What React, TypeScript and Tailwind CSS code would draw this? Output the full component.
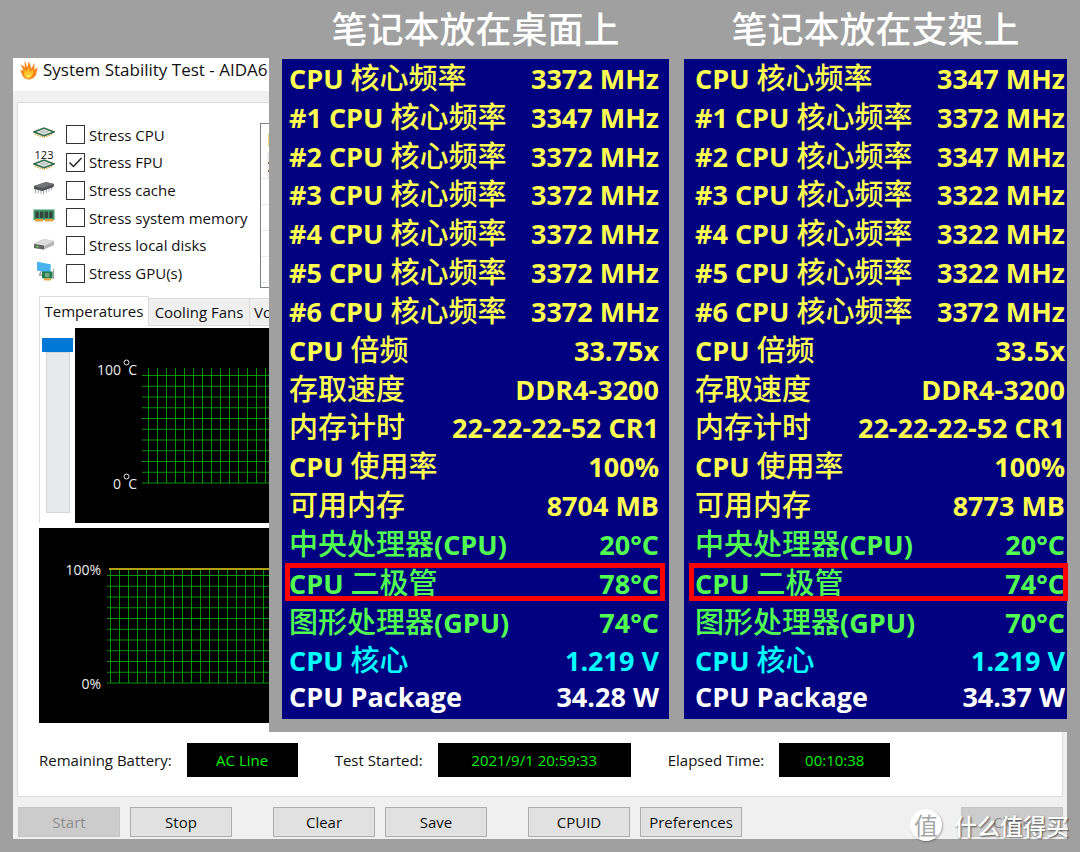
import { Fragment, type ReactNode } from "react";

type Tone = "yellow" | "green" | "cyan" | "white";

const toneClass: Record<Tone, string> = {
  yellow: "text-[#ffff50]",
  green: "text-[#50ff50]",
  cyan: "text-[#00ffff]",
  white: "text-white",
};

type Reading = {
  label: string;
  desk: string;
  stand: string;
  tone: Tone;
  marked?: boolean;
};

const readings: Reading[] = [
  { label: "CPU 核心频率", desk: "3372 MHz", stand: "3347 MHz", tone: "yellow" },
  { label: "#1 CPU 核心频率", desk: "3347 MHz", stand: "3372 MHz", tone: "yellow" },
  { label: "#2 CPU 核心频率", desk: "3372 MHz", stand: "3347 MHz", tone: "yellow" },
  { label: "#3 CPU 核心频率", desk: "3372 MHz", stand: "3322 MHz", tone: "yellow" },
  { label: "#4 CPU 核心频率", desk: "3372 MHz", stand: "3322 MHz", tone: "yellow" },
  { label: "#5 CPU 核心频率", desk: "3372 MHz", stand: "3322 MHz", tone: "yellow" },
  { label: "#6 CPU 核心频率", desk: "3372 MHz", stand: "3372 MHz", tone: "yellow" },
  { label: "CPU 倍频", desk: "33.75x", stand: "33.5x", tone: "yellow" },
  { label: "存取速度", desk: "DDR4-3200", stand: "DDR4-3200", tone: "yellow" },
  { label: "内存计时", desk: "22-22-22-52 CR1", stand: "22-22-22-52 CR1", tone: "yellow" },
  { label: "CPU 使用率", desk: "100%", stand: "100%", tone: "yellow" },
  { label: "可用内存", desk: "8704 MB", stand: "8773 MB", tone: "yellow" },
  { label: "中央处理器(CPU)", desk: "20°C", stand: "20°C", tone: "green" },
  { label: "CPU 二极管", desk: "78°C", stand: "74°C", tone: "green", marked: true },
  { label: "图形处理器(GPU)", desk: "74°C", stand: "70°C", tone: "green" },
  { label: "CPU 核心", desk: "1.219 V", stand: "1.219 V", tone: "cyan" },
  { label: "CPU Package", desk: "34.28 W", stand: "34.37 W", tone: "white" },
];

// Latin runs are bold, Chinese runs stay lighter and a little larger
function MixedText({ text }: { text: string }) {
  const parts = text.split(/([\u4e00-\u9fff]+)/);
  return (
    <>
      {parts.map((part, i) =>
        /[\u4e00-\u9fff]/.test(part) ? (
          <span key={i} className="font-['Noto_Sans_CJK_SC',sans-serif] text-[29px] font-medium">
            {part}
          </span>
        ) : (
          <Fragment key={i}>{part}</Fragment>
        )
      )}
    </>
  );
}

type PanelProps = {
  title: string;
  side: "desk" | "stand";
  className: string;
  padding: string;
  frame: string;
};

function SensorPanel({ title, side, className, padding, frame }: PanelProps) {
  return (
    <section className={className}>
      <h2 className="h-[59px] text-center font-['Noto_Sans_CJK_SC',sans-serif] text-[36px] leading-[55px] font-medium whitespace-nowrap text-white">
        {title}
      </h2>
      <div className={`bg-[#000080] ${padding}`}>
        <table className="block font-['Open_Sans',sans-serif] text-[27px] leading-[34px] font-bold whitespace-nowrap">
          <tbody className="grid h-[660px] auto-rows-fr">
            {readings.map((row) => (
              <tr key={row.label} className={`relative flex items-baseline justify-between ${toneClass[row.tone]}`}>
                <th scope="row" className="p-0 text-left">
                  <MixedText text={row.label} />
                  {row.marked && (
                    <span className={`absolute -top-px bottom-[2px] border-[5px] border-[#ff0000] ${frame}`} />
                  )}
                </th>
                <td className="p-0 text-right">{row[side]}</td>
              </tr>
            ))}
          </tbody>
        </table>
      </div>
    </section>
  );
}

function FlameIcon() {
  return (
    <svg width="18" height="20" viewBox="0 0 18 20" className="shrink-0">
      <path
        d="M5 0.5C5.5 3 7 5 6.6 7.5C8 6 8.6 3.5 8.4 1.5C10.5 3.6 11 6 10.6 8.5C12 7.6 13.4 5.2 14.4 2.8C14.8 5.5 14 8 14.4 9.6C15.6 9 16.6 8.2 17.6 7.6C17.6 10 16.6 11 16.4 13C16 17 12 19.5 8.4 19.6C4.4 19 2.4 16.5 1.6 13.5C1.4 12 0.8 11 0.2 10C1.6 9.8 2.8 10.2 3.6 10.6C2.4 8.6 1.4 7 1.2 4.6C2.6 5.2 3.6 6.6 4.6 7.6C5 5 4.4 2.6 5 0.5Z"
        fill="#f7861b"
      />
      <path
        d="M4.6 9.6C5.8 10 6.2 11 6.8 12C7.4 10.4 8 9 8.6 7.4C9.6 9 9.6 10.6 10 12C11 11 11.8 10.4 13 9.8C12.8 12 13.4 13 12.4 15C11.4 17.4 9.6 18.6 8 18.6C5.6 18 4 16 4 13.8C4.2 12.2 4.8 11 4.6 9.6Z"
        fill="#ffc629"
      />
      <path d="M6 14C7.2 14.4 7.6 15 8 15.6C8.8 14.8 9.6 14 10.6 13.6C10.8 16 9.4 17.8 8 18C6.8 17.4 6 16 6 14Z" fill="#ffe45c" />
    </svg>
  );
}

function ChipIcon() {
  return (
    <svg width="22" height="11" viewBox="0 0 22 11">
      <path d="M2 7l8.5 3.4L20 7" fill="none" stroke="#d5a93e" strokeWidth="1.6" strokeDasharray="1.4 1" />
      <path d="M0.8 5L11 1L21.2 5L11 8.6Z" fill="#dfe5df" stroke="#2f6b4c" strokeWidth="1.5" />
      <path d="M5.5 4.8L11 2.8L16.5 4.8L11 6.8Z" fill="#c5cbc7" />
    </svg>
  );
}

function FpuIcon() {
  return (
    <span className="flex flex-col items-center">
      <span className="h-[9px] font-['Open_Sans',sans-serif] text-[11px] leading-[9px]">123</span>
      <ChipIcon />
    </span>
  );
}

function CacheIcon() {
  return (
    <svg width="22" height="14" viewBox="0 0 22 14">
      <path d="M2.5 8v4M5.2 8.5v4M8 9v4M10.6 9v4.5M13.4 8v4M16 6.5v4M18.5 5v4" stroke="#a9a9a9" strokeWidth="1" />
      <path d="M1 5L13 1L21 3L20.6 6L9.4 10L1 8Z" fill="#505256" />
      <path d="M1 5L13 1L21 3L9.4 7Z" fill="#73757a" />
    </svg>
  );
}

function MemoryIcon() {
  return (
    <svg width="22" height="14" viewBox="0 0 22 14">
      <path d="M0.5 0.5H21.5V11H0.5Z" fill="#3f9a6c" />
      <path d="M2.4 2.4H5.8V9H2.4ZM7 2.4H10.4V9H7ZM11.6 2.4H15V9H11.6ZM16.2 2.4H19.6V9H16.2Z" fill="#34453f" />
      <path d="M2 10H10V12.6H2ZM12 10H20.4V12.6H12Z" fill="#e6a13c" />
    </svg>
  );
}

function DiskIcon() {
  return (
    <svg width="22" height="14" viewBox="0 0 22 14">
      <path d="M1 7.5L11 3L21 5V9L11 13.6L1 12Z" fill="#b5b5b5" />
      <path d="M1 8L12 3L21 5L11 10Z" fill="#dedede" />
      <path d="M1 8L11 9.6V13.6L1 12Z" fill="#626462" />
      <path d="M2.8 10.3l3 .5" stroke="#63d063" strokeWidth="1.2" />
    </svg>
  );
}

function GpuIcon() {
  return (
    <svg width="22" height="20" viewBox="0 0 22 20">
      <path d="M4 0.8L17.6 3.2V12.6L4 9.6Z" fill="#48b2ee" />
      <path d="M8 10.6L6.6 14H11" fill="none" stroke="#9a9a9a" strokeWidth="1.4" />
      <path d="M9 10.5H19.6V17.4H9Z" fill="#257b4c" />
      <path d="M12 12H16.4V16H12Z" fill="#75ab84" />
      <path d="M20.6 8V18" stroke="#9c9c9c" strokeWidth="1" />
      <path d="M11 17.4H18V19.4H11Z" fill="#e6a13c" />
    </svg>
  );
}

const stressItems: { label: string; icon: ReactNode; checked: boolean }[] = [
  { label: "Stress CPU", icon: <ChipIcon />, checked: false },
  { label: "Stress FPU", icon: <FpuIcon />, checked: true },
  { label: "Stress cache", icon: <CacheIcon />, checked: false },
  { label: "Stress system memory", icon: <MemoryIcon />, checked: false },
  { label: "Stress local disks", icon: <DiskIcon />, checked: false },
  { label: "Stress GPU(s)", icon: <GpuIcon />, checked: false },
];

function StressOptions() {
  return (
    <div className="grid h-[166px] grid-rows-6 pl-[15px]">
      {stressItems.map((item) => (
        <label key={item.label} className="flex items-center whitespace-nowrap">
          <span className="mb-1 flex w-[22px] justify-center">{item.icon}</span>
          <span className="relative ml-[11px] flex">
            <input
              type="checkbox"
              defaultChecked={item.checked}
              className="peer size-[19px] appearance-none border border-[#333] bg-white"
            />
            <svg
              viewBox="0 0 19 19"
              className="pointer-events-none absolute inset-0 hidden size-[19px] peer-checked:block"
            >
              <path d="M3.5 9.5L7.5 13.5L15.5 5" fill="none" stroke="#222" strokeWidth="1.5" />
            </svg>
          </span>
          <span className="ml-1 leading-5">{item.label}</span>
        </label>
      ))}
    </div>
  );
}

const columns = Array.from({ length: 24 }, (_, i) => i * 9);
const lines = Array.from({ length: 11 }, (_, i) => i * 10.75);

function TemperatureChart() {
  return (
    <svg className="h-[195px] w-full bg-black" role="img" aria-label="Temperatures">
      <g stroke="#009400" strokeWidth="1">
        {columns.map((x) => (
          <line key={x} x1={x + 73.5} x2={x + 73.5} y1="40" y2="155" />
        ))}
        {lines.map((y) => (
          <line key={y} x1="67" x2="100%" y1={y + 47.5} y2={y + 47.5} />
        ))}
      </g>
      <g fill="#ececec" fontFamily="Open Sans, sans-serif" fontSize="14" textAnchor="end">
        <text x="46" y="47">100</text>
        <text x="62" y="47">C</text>
        <text x="46" y="161">0</text>
        <text x="62" y="161">C</text>
      </g>
      <g fill="none" stroke="#ececec">
        <circle cx="51.5" cy="34.5" r="2.5" />
        <circle cx="51.5" cy="148.5" r="2.5" />
      </g>
    </svg>
  );
}

function UsageChart() {
  return (
    <svg className="h-[195px] w-full bg-black" role="img" aria-label="CPU usage">
      <g stroke="#009400" strokeWidth="1">
        {columns.map((x) => (
          <line key={x} x1={x + 71.5} x2={x + 71.5} y1="41" y2="155" />
        ))}
        {lines.map((y) => (
          <line key={y} x1="68" x2="100%" y1={y + 47.5} y2={y + 47.5} />
        ))}
      </g>
      <line x1="70" x2="100%" y1="41" y2="41" stroke="#b0a010" strokeWidth="2" />
      <g fill="#ececec" fontFamily="Open Sans, sans-serif" fontSize="14" textAnchor="end">
        <text x="62" y="47">100%</text>
        <text x="62" y="161">0%</text>
      </g>
    </svg>
  );
}

function StressWindow() {
  return (
    <div className="mt-[58px] flex w-[256px] shrink-0 flex-col overflow-hidden bg-[#f0f0f0]">
      <header className="flex h-[33px] shrink-0 items-start gap-[5px] bg-white pt-[2px] pl-[7px] whitespace-nowrap">
        <FlameIcon />
        <h1 className="text-[17px] leading-[20px]">System Stability Test - AIDA6</h1>
      </header>

      <div className="mt-[11px] ml-1 flex-1 border-t border-l border-[#dcdcdc] bg-white">
        <div className="flex justify-between pt-[18px]">
          <StressOptions />
          {/* event log, only its left edge is visible */}
          <div className="mt-[2px] h-[165px] w-[9px] shrink-0 border-y border-l border-[#7a7f8a]">
            <svg width="8" height="163" viewBox="0 0 8 163">
              <path d="M0 54.5H8M0 80.5H8M0 106.5H8M0 132.5H8M0 158.5H8" stroke="#ececec" />
              <path d="M7 10H8V22H7Z" fill="#f5d878" />
              <path d="M6 28H8V54H6Z" fill="#efefef" />
              <path d="M7 38H8V40H7ZM7 46H8V48H7Z" fill="#a3562d" />
            </svg>
          </div>
        </div>

        <div className="mt-2 ml-[21px]">
          <div role="tablist" className="flex h-[30px] items-end whitespace-nowrap">
            <button role="tab" aria-selected="true" className="h-[30px] w-[110px] shrink-0 border-x border-t border-[#dcdcdc] bg-white">
              Temperatures
            </button>
            <button role="tab" aria-selected="false" className="h-[28px] w-[101px] shrink-0 border-y border-r border-[#dcdcdc] bg-[#f0f0f0]">
              Cooling Fans
            </button>
            <button role="tab" aria-selected="false" className="h-[28px] flex-1 border-y border-[#dcdcdc] bg-[#f0f0f0] pl-1 text-left">
              Vo
            </button>
          </div>
          <div className="flex border-l border-[#dcdcdc] pt-[2px]">
            <div className="flex w-[35px] shrink-0 flex-col items-center pt-[10px]">
              <div className="h-[14px] w-[31px] bg-[#0078d7]" />
              <div className="h-[161px] w-[24px] border border-[#d6d6d6] bg-[#e7eaea]" />
            </div>
            <TemperatureChart />
          </div>
          <div className="mt-[5px] flex">
            <UsageChart />
          </div>
        </div>
      </div>
    </div>
  );
}

function StatusBox({ label, value, width }: { label: string; value: string; width: string }) {
  return (
    <div className="flex items-center gap-[15px]">
      <span>{label}</span>
      <output className={`h-[34px] bg-black text-center leading-[34px] text-[#00f000] ${width}`}>{value}</output>
    </div>
  );
}

function PushButton({ children, disabled = false }: { children: ReactNode; disabled?: boolean }) {
  return (
    <button
      disabled={disabled}
      className="h-[30px] w-[102px] shrink-0 border border-[#adadad] bg-[#e1e1e1] disabled:border-[#c4c4c4] disabled:bg-[#cccccc] disabled:text-[#8e8e8e]"
    >
      {children}
    </button>
  );
}

export default function App() {
  return (
    <div className="relative min-h-screen overflow-hidden bg-[#a0a0a0] pl-[13px] font-['Open_Sans',sans-serif] text-[15px] text-[#111]">
      <div className="flex">
        <StressWindow />
        <main className="flex min-w-0 flex-1 gap-[15px] px-[13px] pb-[13px]">
          <SensorPanel
            title="笔记本放在桌面上"
            side="desk"
            className="min-w-0 flex-[387]"
            padding="pl-[7px] pr-[10px]"
            frame="-left-1 -right-[6px]"
          />
          <SensorPanel
            title="笔记本放在支架上"
            side="stand"
            className="min-w-0 flex-[383]"
            padding="pl-[11px] pr-[2px]"
            frame="-left-[6px] -right-[3px]"
          />
        </main>
      </div>

      <footer className="mr-[13px] bg-[#f0f0f0] pb-[2px]">
        <div className="mx-1 flex h-[65px] border-x border-b border-[#dcdcdc] bg-white pt-[11px] pl-[21px] whitespace-nowrap">
          <div className="flex h-[34px] gap-[37px]">
            <StatusBox label="Remaining Battery:" value="AC Line" width="w-[111px]" />
            <StatusBox label="Test Started:" value="2021/9/1 20:59:33" width="w-[193px]" />
            <StatusBox label="Elapsed Time:" value="00:10:38" width="w-[111px]" />
          </div>
        </div>
        <div className="flex justify-between pt-[10px] pr-1 pl-[5px]">
          <div className="flex gap-[41px]">
            <div className="flex gap-[10px]">
              <PushButton disabled>Start</PushButton>
              <PushButton>Stop</PushButton>
            </div>
            <div className="flex gap-[10px]">
              <PushButton>Clear</PushButton>
              <PushButton>Save</PushButton>
            </div>
            <div className="flex gap-[10px]">
              <PushButton>CPUID</PushButton>
              <PushButton>Preferences</PushButton>
            </div>
          </div>
          <PushButton disabled>Close</PushButton>
        </div>
      </footer>

      {/* watermark */}
      <div className="absolute right-[11px] bottom-[10px] flex items-center gap-3 font-['Noto_Sans_CJK_SC',sans-serif] text-white">
        <span className="flex size-8 items-center justify-center rounded-full bg-white text-[24px] leading-8 text-[#a8a8a8] shadow-[1px_1px_2px_rgba(0,0,0,0.3)]">
          值
        </span>
        <span className="text-[23px] leading-[34px] font-medium [text-shadow:1px_1px_2px_rgba(0,0,0,0.6)]">
          什么值得买
        </span>
      </div>
    </div>
  );
}
